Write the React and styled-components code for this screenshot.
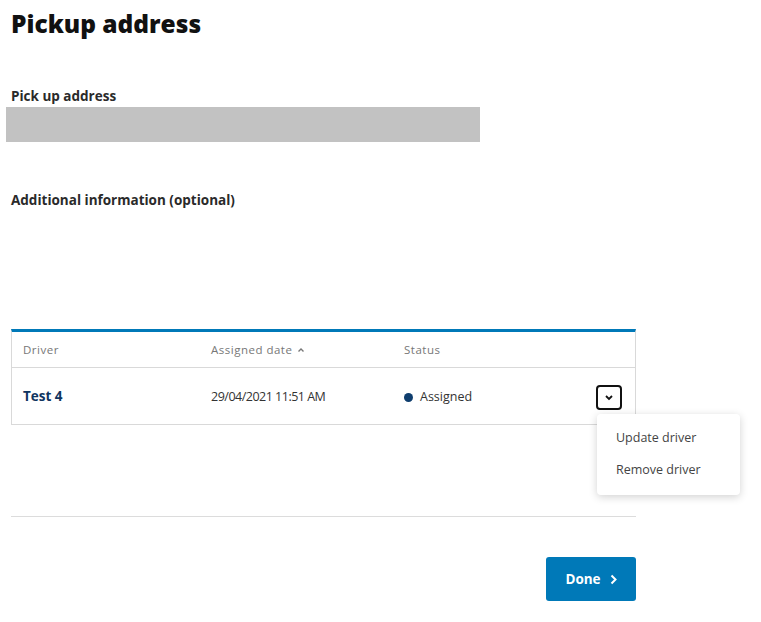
import React from "react";
import styled, { createGlobalStyle } from "styled-components";

const Global = createGlobalStyle`
  html, body { margin: 0; padding: 0; background: #fff; }
  body { font-family: "Open Sans", Lato, sans-serif; color: #222; }
  * { box-sizing: border-box; }
`;

const Page = styled.div`
  width: 636px;
  padding: 8px 0 0 11px;
  display: flex;
  flex-direction: column;
`;

const Title = styled.h1`
  margin: 0;
  font-size: 24.5px;
  line-height: 32px;
  font-weight: 800;
  color: #111;
`;

const Label = styled.div`
  margin-top: ${(p) => p.$top}px;
  font-size: 13.5px;
  line-height: 17px;
  font-weight: 700;
  color: #2a2a2a;
`;

const Placeholder = styled.div`
  margin-left: -5px;
  margin-top: 2px;
  width: 474px;
  height: 35px;
  background: #c2c2c2;
`;

const Table = styled.div`
  margin-top: 120px;
  position: relative;
  border-top: 3px solid #0079b8;
  border-left: 1px solid #d9d9d9;
  border-right: 1px solid #d9d9d9;
  border-bottom: 1px solid #d9d9d9;
`;

const Row = styled.div`
  display: grid;
  grid-template-columns: 188px 193px 1fr auto;
  align-items: center;
  padding: 0 13px 0 11px;
  height: ${(p) => p.$h}px;
  border-bottom: ${(p) => (p.$line ? "1px solid #d9d9d9" : "none")};
`;

const HeadCell = styled.div`
  font-size: 11.5px;
  color: #777;
  letter-spacing: 0.5px;
  display: flex;
  align-items: center;
  gap: 5px;
`;

const DriverName = styled.div`
  font-size: 13.5px;
  font-weight: 700;
  color: #0f3560;
`;

const Cell = styled.div`
  font-size: 12.5px;
  color: #333;
  display: flex;
  align-items: center;
  gap: 7px;
  letter-spacing: ${(p) => (p.$tight ? "-0.5px" : "0")};
`;

const Dot = styled.span`
  width: 9px;
  height: 9px;
  border-radius: 50%;
  background: #0f3e6e;
  margin-top: 2px;
`;

const Toggle = styled.button`
  width: 26px;
  height: 25px;
  border: 2px solid #111;
  border-radius: 4px;
  background: #fff;
  padding: 0;
  display: flex;
  align-items: center;
  justify-content: center;
  margin-top: 2px;
`;

const Menu = styled.div`
  position: absolute;
  left: 585px;
  top: 82px;
  width: 143px;
  height: 81px;
  background: #fff;
  border-radius: 4px;
  box-shadow: 0 2px 8px rgba(0, 0, 0, 0.18);
  padding: 15px 0 0 19px;
  display: flex;
  flex-direction: column;
  gap: 15px;
  z-index: 2;
`;

const MenuItem = styled.div`
  font-size: 12.5px;
  line-height: 17px;
  color: #444;
`;

const Divider = styled.hr`
  margin: 91px 0 0 0;
  border: none;
  border-top: 1px solid #dcdcdc;
  width: 625px;
`;

const Actions = styled.div`
  display: flex;
  justify-content: flex-end;
  width: 625px;
  margin-top: 40px;
`;

const DoneButton = styled.button`
  width: 90px;
  height: 44px;
  background: #0079b8;
  border: none;
  border-radius: 3px;
  color: #fff;
  font-family: inherit;
  font-size: 13.5px;
  font-weight: 700;
  display: flex;
  align-items: center;
  justify-content: center;
  gap: 9px;
`;

export default function App() {
  return (
    <>
      <Global />
      <Page>
        <Title>Pickup address</Title>
        <Label $top={48}>Pick up address</Label>
        <Placeholder />
        <Label $top={50}>Additional information (optional)</Label>
        <Table>
          <Row $h={36} $line>
            <HeadCell>Driver</HeadCell>
            <HeadCell>
              Assigned date
              <svg width="8" height="6" viewBox="0 0 8 6">
                <path d="M1.5 4.5 L4 2 L6.5 4.5" fill="none" stroke="#777" strokeWidth="1.4" />
              </svg>
            </HeadCell>
            <HeadCell>Status</HeadCell>
            <span />
          </Row>
          <Row $h={56}>
            <DriverName>Test 4</DriverName>
            <Cell $tight>29/04/2021 11:51 AM</Cell>
            <Cell>
              <Dot />
              Assigned
            </Cell>
            <Toggle aria-label="actions">
              <svg width="10" height="7" viewBox="0 0 10 7">
                <path d="M2 2 L5 5 L8 2" fill="none" stroke="#111" strokeWidth="1.8" />
              </svg>
            </Toggle>
          </Row>
          <Menu>
            <MenuItem>Update driver</MenuItem>
            <MenuItem>Remove driver</MenuItem>
          </Menu>
        </Table>
        <Divider />
        <Actions>
          <DoneButton>
            Done
            <svg width="7" height="11" viewBox="0 0 7 11">
              <path d="M1.5 1.5 L5.5 5.5 L1.5 9.5" fill="none" stroke="#fff" strokeWidth="2" />
            </svg>
          </DoneButton>
        </Actions>
      </Page>
    </>
  );
}
